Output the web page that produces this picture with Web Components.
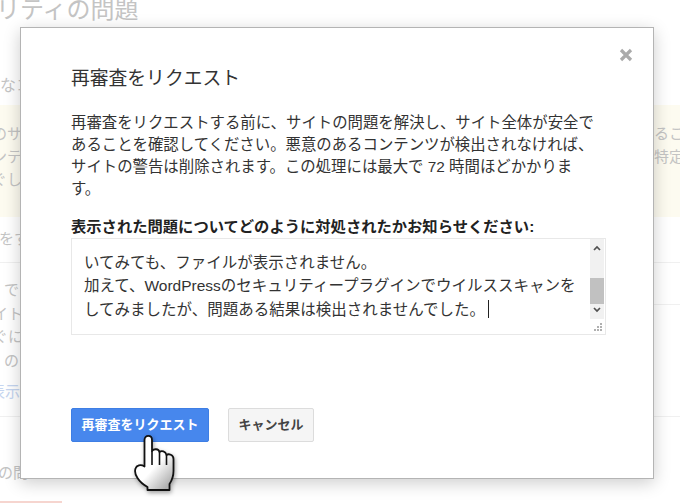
<!DOCTYPE html>
<html lang="ja">
<head>
<meta charset="utf-8">
<title>再審査をリクエスト</title>
<style>
  html, body { margin: 0; height: 100%; overflow: hidden; background: #fff; }
  body { font-family: "Liberation Sans", "Noto Sans CJK JP", sans-serif; color: #333; }
</style>
</head>
<body>
<page-behind></page-behind>
<review-dialog>
  <span slot="title">再審査をリクエスト</span>
  <span slot="intro">再審査をリクエストする前に、サイトの問題を解決し、サイト全体が安全で<br>あることを確認してください。悪意のあるコンテンツが検出されなければ、<br>サイトの警告は削除されます。この処理には最大で 72 時間ほどかかりま<br>す。</span>
  <span slot="label">表示された問題についてどのように対処されたかお知らせください:</span>
  <note-box slot="box">いてみても、ファイルが表示されません。<br>加えて、WordPressのセキュリティープラグインでウイルススキャンを<br>してみましたが、問題ある結果は検出されませんでした。</note-box>
  <g-button slot="actions" primary>再審査をリクエスト</g-button>
  <g-button slot="actions">キャンセル</g-button>
</review-dialog>
<hand-cursor></hand-cursor>

<script>
class PageBehind extends HTMLElement {
  constructor() {
    super();
    this.attachShadow({mode: "open"}).innerHTML = `
      <style>
        :host {
          display: block;
          height: 503px;
          overflow: hidden;
          color: #c4c4c4;
          font-size: 15px;
          line-height: 23px;
          white-space: nowrap;
        }
        .head { font-size: 24px; line-height: 32px; margin: -6px 0 0 -4px; }
        .sub { font-size: 16px; line-height: 24px; margin-top: 48px; }
        .warn {
          height: 112px;
          margin-top: 7px;
          padding-top: 17px;
          box-sizing: border-box;
          background: #fdfbf0;
          display: flex;
          justify-content: space-between;
        }
        .warn div { margin-left: -8px; }
        .warn div + div { margin: 0 -4px 0 0; width: 30px; }
        .ask { height: 46px; padding-top: 10px; box-sizing: border-box; border-bottom: 1px solid #f0f0f0; margin-left: -1px; }
        .rows {
          height: 154px;
          padding-top: 15px;
          box-sizing: border-box;
          line-height: 23.5px;
          border-bottom: 1px solid #f0f0f0;
          background: linear-gradient(#f0f0f0, #f0f0f0) right 0 top 41px / 60px 1px no-repeat;
        }
        .rows p { margin: 0; }
        .more { color: #c5d5f0; margin: 8px 0 0 -10px !important; }
        .tail { margin: 44px 0 0 -2px; }
        .red { width: 62px; height: 4px; margin-top: 17px; background: #f6d5cf; }
      </style>
      <div class="head">リティの問題</div>
      <div class="sub">なコ</div>
      <div class="warn">
        <div>のサ<br>ンテ<br>ぐし</div>
        <div>るこ<br>特定</div>
      </div>
      <div class="ask">をす</div>
      <div class="rows">
        <p style="margin-left:4px">で</p>
        <p style="margin-left:-7px">イト</p>
        <p style="margin-left:-7px">ぐに</p>
        <p style="margin-left:4px">の</p>
        <p class="more">表示</p>
      </div>
      <div class="tail">の問</div>
      <div class="red"></div>
    `;
  }
}

class ReviewDialog extends HTMLElement {
  constructor() {
    super();
    this.attachShadow({mode: "open"}).innerHTML = `
      <style>
        :host {
          display: block;
          position: absolute;
          left: 20px;
          top: 27px;
          width: 634px;
          height: 452px;
          box-sizing: border-box;
          padding: 38px 48px 0 50px;
          background: #fff;
          border: 1px solid #b4b4b4;
          box-shadow: 0 4px 16px rgba(0,0,0,.2);
          color: #333;
        }
        .close {
          position: absolute;
          right: 20px;
          top: 20px;
          width: 14px;
          height: 14px;
        }
        h1 { margin: 0; font-size: 18.8px; line-height: 26px; font-weight: normal; color: #333; }
        p { margin: 20px 0 0; font-size: 15.4px; line-height: 21.9px; white-space: nowrap; }
        .label { margin: 16px 0 0; font-size: 15.3px; line-height: 22px; font-weight: bold; color: #222; white-space: nowrap; }
        .box { margin-top: 0; }
        .actions { display: flex; gap: 19px; margin-top: 73px; }
      </style>
      <svg class="close" viewBox="0 0 14 14"><path d="M2 2l10 10M12 2L2 12" stroke="#aaa" stroke-width="3.2" fill="none"/></svg>
      <h1><slot name="title"></slot></h1>
      <p><slot name="intro"></slot></p>
      <div class="label"><slot name="label"></slot></div>
      <div class="box"><slot name="box"></slot></div>
      <div class="actions"><slot name="actions"></slot></div>
    `;
  }
}

class NoteBox extends HTMLElement {
  constructor() {
    super();
    this.attachShadow({mode: "open"}).innerHTML = `
      <style>
        :host {
          display: block;
          width: 535px;
          height: 97px;
          box-sizing: border-box;
          border: 1px solid #e8e8e8;
          position: relative;
          font-size: 15.5px;
          line-height: 23.6px;
          color: #333;
          white-space: nowrap;
        }
        .text { padding: 12px 0 0 12px; }
        .caret { display: inline-block; width: 1px; height: 18px; background: #222; margin-left: 3px; vertical-align: -3px; }
        .bar {
          position: absolute;
          right: 1px;
          top: 0;
          width: 14px;
          height: 80px;
          background: #f1f1f1;
        }
        .bar svg { position: absolute; left: 3px; width: 8px; height: 6px; }
        .thumb { position: absolute; left: 0; right: 0; top: 39px; height: 26px; background: #c1c1c1; }
        .grip { position: absolute; right: 2px; bottom: 2px; width: 9px; height: 9px; }
      </style>
      <div class="text"><slot></slot><span class="caret"></span></div>
      <div class="bar">
        <svg style="top:6px" viewBox="0 0 8 6"><path d="M1 5l3-3 3 3" stroke="#505050" stroke-width="1.7" fill="none"/></svg>
        <div class="thumb"></div>
        <svg style="bottom:6px" viewBox="0 0 8 6"><path d="M1 1l3 3 3-3" stroke="#505050" stroke-width="1.7" fill="none"/></svg>
      </div>
      <svg class="grip" viewBox="0 0 9 9" fill="#b0b0b0">
        <rect x="6" y="0" width="2" height="2"/><rect x="6" y="3" width="2" height="2"/><rect x="3" y="3" width="2" height="2"/>
        <rect x="6" y="6" width="2" height="2"/><rect x="3" y="6" width="2" height="2"/><rect x="0" y="6" width="2" height="2"/>
      </svg>
    `;
  }
}

class GButton extends HTMLElement {
  constructor() {
    super();
    this.attachShadow({mode: "open"}).innerHTML = `
      <style>
        :host {
          display: block;
          height: 34.5px;
          box-sizing: border-box;
          padding: 0 9.5px;
          font-size: 13px;
          font-weight: bold;
          line-height: 32.5px;
          border-radius: 2px;
          border: 1px solid #dcdcdc;
          background: #f5f5f5;
          color: #444;
          white-space: nowrap;
        }
        :host([primary]) {
          background: #4787ed;
          border-color: #3e7ee4;
          color: #fff;
        }
      </style>
      <slot></slot>
    `;
  }
}

class HandCursor extends HTMLElement {
  constructor() {
    super();
    this.attachShadow({mode: "open"}).innerHTML = `
      <style>
        :host { display: block; position: absolute; left: 130px; top: 430px; width: 50px; height: 65px; }
        svg { display: block; filter: drop-shadow(1px 2px 2px rgba(0,0,0,.35)); }
      </style>
      <svg width="50" height="65" viewBox="0 0 50 65">
        <defs>
          <linearGradient id="shade" x1="0.2" y1="0.3" x2="0.75" y2="1">
            <stop offset="0.45" stop-color="#fff"/>
            <stop offset="1" stop-color="#b0b0b0"/>
          </linearGradient>
        </defs>
        <path d="M14.5 10C14.500 4.500 22 4.500 22 10V21C24 18.500 28.500 18.500 29.500 22C31.500 20.500 35.500 21 36.500 25C38.500 23.500 43.500 24.500 43.500 29V41C43.500 47 41.500 51 39.500 54V60H17.500V57C13 54.500 10 52 7.500 48C5.500 45 4.500 41.500 5.500 38.500C6.500 35.500 10.500 34 14.500 36.500Z"
          fill="url(#shade)" stroke="#111" stroke-width="1.8" stroke-linejoin="round"/>
        <path d="M22 21V35M29.500 22V35M36.500 25V35" stroke="#111" stroke-width="1.6" fill="none"/>
      </svg>
    `;
  }
}

customElements.define("page-behind", PageBehind);
customElements.define("review-dialog", ReviewDialog);
customElements.define("note-box", NoteBox);
customElements.define("g-button", GButton);
customElements.define("hand-cursor", HandCursor);
</script>
</body>
</html>
